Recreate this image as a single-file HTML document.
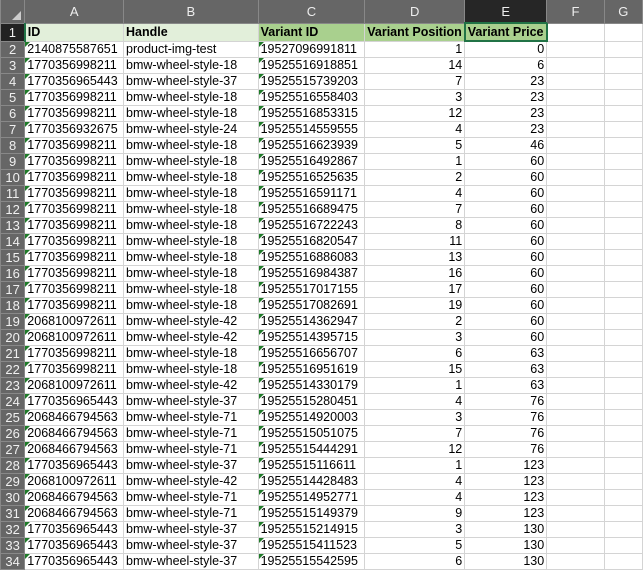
<!DOCTYPE html>
<html><head><style>
body{margin:0;width:643px;height:567px;overflow:hidden;background:#fff;font-family:"Liberation Sans",Arial,sans-serif;font-size:12.5px}
table{border-collapse:collapse;table-layout:fixed;position:absolute;left:0;top:0}
td{padding:0 2px;height:15px;line-height:15px;border:1px solid #d4d4d4;white-space:nowrap;overflow:hidden;color:#000;position:relative}
td.rh{background:#666;color:#f0f0f0;text-align:center;border:1px solid #888;padding:0;font-size:13px}
tr.hd td{background:#666;color:#eee;text-align:center;height:22px;border:1px solid #888;border-top:none;font-size:13px}
tr.hd td.corner{position:relative}
tr.r1 td{height:16px;font-weight:bold}
.g1{background:#e2efda}.g2{background:#a9d08e}
.n{text-align:right}
.t::before{content:"";position:absolute;left:0;top:0;border-top:5px solid #1e7a28;border-right:5px solid transparent}
</style></head><body>
<table>
<colgroup><col style="width:25px"><col style="width:99px"><col style="width:136px"><col style="width:107px"><col style="width:100px"><col style="width:82px"><col style="width:61px"><col style="width:40px"></colgroup>
<tr class="hd"><td class="corner"><span style="position:absolute;right:3px;bottom:3px;border-bottom:9px solid #ccc;border-left:9px solid transparent"></span></td><td>A</td><td>B</td><td>C</td><td>D</td><td style="background:#262626;border-bottom:2px solid #217346">E</td><td>F</td><td>G</td></tr>
<tr class="r1"><td class="rh" style="background:#222;font-weight:normal">1</td><td class="g1" style="border-left:2px solid #217346">ID</td><td class="g1">Handle</td><td class="g2">Variant ID</td><td class="g2">Variant Position</td><td class="g2" style="border:2px solid #217346">Variant Price</td><td></td><td></td></tr>
<script>
var d=[["2140875587651","product-img-test","19527096991811",1,0],
["1770356998211","bmw-wheel-style-18","19525516918851",14,6],
["1770356965443","bmw-wheel-style-37","19525515739203",7,23],
["1770356998211","bmw-wheel-style-18","19525516558403",3,23],
["1770356998211","bmw-wheel-style-18","19525516853315",12,23],
["1770356932675","bmw-wheel-style-24","19525514559555",4,23],
["1770356998211","bmw-wheel-style-18","19525516623939",5,46],
["1770356998211","bmw-wheel-style-18","19525516492867",1,60],
["1770356998211","bmw-wheel-style-18","19525516525635",2,60],
["1770356998211","bmw-wheel-style-18","19525516591171",4,60],
["1770356998211","bmw-wheel-style-18","19525516689475",7,60],
["1770356998211","bmw-wheel-style-18","19525516722243",8,60],
["1770356998211","bmw-wheel-style-18","19525516820547",11,60],
["1770356998211","bmw-wheel-style-18","19525516886083",13,60],
["1770356998211","bmw-wheel-style-18","19525516984387",16,60],
["1770356998211","bmw-wheel-style-18","19525517017155",17,60],
["1770356998211","bmw-wheel-style-18","19525517082691",19,60],
["2068100972611","bmw-wheel-style-42","19525514362947",2,60],
["2068100972611","bmw-wheel-style-42","19525514395715",3,60],
["1770356998211","bmw-wheel-style-18","19525516656707",6,63],
["1770356998211","bmw-wheel-style-18","19525516951619",15,63],
["2068100972611","bmw-wheel-style-42","19525514330179",1,63],
["1770356965443","bmw-wheel-style-37","19525515280451",4,76],
["2068466794563","bmw-wheel-style-71","19525514920003",3,76],
["2068466794563","bmw-wheel-style-71","19525515051075",7,76],
["2068466794563","bmw-wheel-style-71","19525515444291",12,76],
["1770356965443","bmw-wheel-style-37","19525515116611",1,123],
["2068100972611","bmw-wheel-style-42","19525514428483",4,123],
["2068466794563","bmw-wheel-style-71","19525514952771",4,123],
["2068466794563","bmw-wheel-style-71","19525515149379",9,123],
["1770356965443","bmw-wheel-style-37","19525515214915",3,130],
["1770356965443","bmw-wheel-style-37","19525515411523",5,130],
["1770356965443","bmw-wheel-style-37","19525515542595",6,130]];
for(var i=0;i<d.length;i++){var r=d[i];document.write('<tr><td class="rh">'+(i+2)+'</td><td class="t">'+r[0]+'</td><td>'+r[1]+'</td><td class="t">'+r[2]+'</td><td class="n">'+r[3]+'</td><td class="n">'+r[4]+'</td><td></td><td></td></tr>');}
</script>
</table>
</body></html>
